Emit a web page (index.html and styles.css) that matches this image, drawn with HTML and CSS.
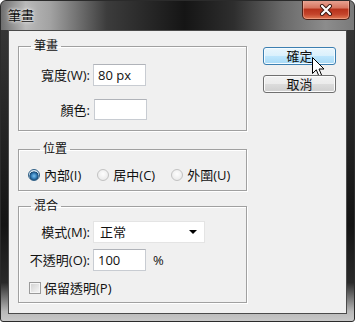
FILE: index.html
```html
<!DOCTYPE html>
<html lang="zh-Hant">
<head>
    <meta charset="UTF-8">
    <title>筆畫</title>
    <link rel="stylesheet" href="styles.css">
</head>
<body>
    <div class="window">
        <div class="titlebar">
            <span class="title">筆畫</span>
            <div class="close-btn">
                <svg width="14" height="12" viewBox="0 0 14 12">
                    <path d="M3 2 L11 10 M11 2 L3 10" stroke="#3a1810" stroke-width="4" stroke-linecap="round"/>
                    <path d="M3 2 L11 10 M11 2 L3 10" stroke="#fff" stroke-width="2.2" stroke-linecap="round"/>
                </svg>
            </div>
        </div>

        <div class="frame">
            <div class="client">
                <div class="groups">
                    <fieldset class="group group-stroke">
                        <legend>筆畫</legend>
                        <div class="form-grid">
                            <label class="lbl">寬度(W):</label>
                            <span class="field">80 px</span>
                            <label class="lbl">顏色:</label>
                            <span class="field color-field"></span>
                        </div>
                    </fieldset>

                    <fieldset class="group group-pos">
                        <legend>位置</legend>
                        <div class="radios">
                            <span class="radio-item"><span class="radio checked"></span>內部(I)</span>
                            <span class="radio-item"><span class="radio"></span>居中(C)</span>
                            <span class="radio-item"><span class="radio"></span>外圍(U)</span>
                        </div>
                    </fieldset>

                    <fieldset class="group group-blend">
                        <legend>混合</legend>
                        <div class="form-grid blend-grid">
                            <label class="lbl">模式(M):</label>
                            <span class="select">正常<span class="arrow"></span></span>
                            <label class="lbl">不透明(O):</label>
                            <span class="with-unit"><span class="field">100</span><span class="unit">%</span></span>
                        </div>
                        <div class="check-row">
                            <span class="checkbox"></span>保留透明(P)
                        </div>
                    </fieldset>
                </div>

                <div class="buttons">
                    <div class="btn btn-hover">確定
                        <svg class="cursor" width="14" height="21" viewBox="0 0 14 21">
                            <path d="M0.5 0.5 L0.5 16.5 L4.3 12.8 L7 19.3 L9.6 18.2 L7 12 L12 12 Z" fill="#fff" stroke="#000" stroke-width="1" stroke-linejoin="round"/>
                        </svg>
                    </div>
                    <div class="btn">取消</div>
                </div>
            </div>
        </div>
    </div>
</body>
</html>
```

FILE: styles.css
```css
body {
    margin: 0;
    padding: 0;
    background-color: #fff;
    font-family: "Open Sans", "Noto Sans CJK TC", sans-serif;
    font-size: 13px;
    color: #111;
}

.window {
    width: 355px;
    height: 322px;
    box-sizing: border-box;
    border: 1px solid #2b2b2b;
    border-radius: 6px 6px 3px 3px;
    display: flex;
    flex-direction: column;
    overflow: hidden;
    background: linear-gradient(to bottom, #3a3a3a 0%, #141414 70%, #2a2a2a 88%, #b8b8b8 97%, #c8c8c8 100%);
}

.titlebar {
    height: 29px;
    flex-shrink: 0;
    display: flex;
    justify-content: space-between;
    align-items: flex-start;
    background: linear-gradient(to right, #6e6e6e 0%, #b9b9b9 7%, #a2a2a2 14%, #3c3c3c 30%, #151515 52%, #2e2e2e 66%, #6a6a6a 80%, #8c8c8c 92%, #7a7a7a 100%);
}

.title {
    margin: 6px 0 0 7px;
    font-size: 13px;
    line-height: 16px;
    text-shadow: 0 0 6px #e0e0e0, 0 0 3px #fff;
}

.close-btn {
    width: 46px;
    height: 19px;
    margin: -1px 4px 0 0;
    border: 1px solid #4b1f17;
    border-top: none;
    border-radius: 0 0 5px 5px;
    box-shadow: inset 0 0 0 1px rgba(255, 200, 180, 0.45);
    background: linear-gradient(to bottom, #e9a898 0%, #d77762 40%, #b8331c 50%, #c4442b 75%, #e07a55 100%);
    display: flex;
    align-items: center;
    justify-content: center;
}

.frame {
    flex: 1;
    padding: 0 7px 7px;
}

.client {
    height: 100%;
    box-sizing: border-box;
    background-color: #f0f0f0;
    border: 1px solid #4a4a4a;
    display: flex;
    gap: 16px;
    padding: 8px 0 0 9px;
}

.groups {
    width: 229px;
    display: flex;
    flex-direction: column;
}

.group {
    box-sizing: border-box;
    width: 229px;
    margin: 0;
    padding: 0;
    border: 1px solid #a0a0a0;
    box-shadow: inset 1px 1px #fff, 1px 1px #fff;
}

.group legend {
    margin-left: 12px;
    padding: 0 3px;
    line-height: 14px;
    font-size: 12px;
}

.group-stroke {
    padding: 11px 0 10px;
}

.group-pos {
    margin-top: 11px;
    padding: 11px 0 7px 9px;
}

.group-blend {
    margin-top: 8px;
    padding: 8px 0 6px;
}

.form-grid {
    display: grid;
    grid-template-columns: 71px auto;
    column-gap: 3px;
    row-gap: 13px;
    align-items: center;
    justify-items: start;
}

.blend-grid {
    row-gap: 6px;
}

.lbl {
    justify-self: end;
    line-height: 16px;
    white-space: nowrap;
}

.field {
    box-sizing: border-box;
    width: 53px;
    height: 22px;
    background-color: #fff;
    border: 1px solid #c8ccd2;
    border-top-color: #b0b3b9;
    padding: 0 4px;
    line-height: 20px;
}

.color-field {
    height: 21px;
    margin-left: 1px;
}

.with-unit {
    display: flex;
    align-items: center;
    gap: 7px;
}

.select {
    box-sizing: border-box;
    width: 112px;
    height: 22px;
    background-color: #fff;
    border: 1px solid #e4e4e4;
    padding: 0 6px;
    line-height: 20px;
    display: flex;
    justify-content: space-between;
    align-items: center;
}

.arrow {
    width: 0;
    height: 0;
    border-left: 4px solid transparent;
    border-right: 4px solid transparent;
    border-top: 4px solid #000;
    margin-right: 1px;
}

.radios {
    display: flex;
    gap: 16px;
    line-height: 16px;
}

.radio-item {
    display: flex;
    align-items: center;
    gap: 4px;
}

.radio {
    box-sizing: border-box;
    width: 12px;
    height: 12px;
    border-radius: 50%;
    border: 1px solid #c2c2c2;
    background: radial-gradient(circle at 50% 40%, #fdfdfd 0%, #ececec 70%, #dcdcdc 100%);
}

.radio.checked {
    border-color: #2f5f86;
    background: radial-gradient(circle at 50% 60%, #7ec1ea 0%, #3a86c2 30%, #174a74 55%, #d6e6f2 62%, #f4f8fb 100%);
}

.check-row {
    display: flex;
    align-items: center;
    gap: 3px;
    margin: 9px 0 0 10px;
    line-height: 16px;
}

.checkbox {
    box-sizing: border-box;
    width: 12px;
    height: 12px;
    border: 1px solid #9a9a9a;
    box-shadow: inset 0 0 0 1px #f6f6f6;
    background: linear-gradient(135deg, #cfcfcf 0%, #e8e8e8 60%, #f7f7f7 100%);
}

.buttons {
    width: 73px;
    padding-top: 8px;
    display: flex;
    flex-direction: column;
    gap: 10px;
}

.btn {
    position: relative;
    box-sizing: border-box;
    height: 18px;
    border: 1px solid #707070;
    border-radius: 3px;
    box-shadow: inset 0 0 0 1px #fbfbfb;
    background: linear-gradient(to bottom, #f2f2f2 0%, #ebebeb 50%, #dcdcdc 51%, #cfcfcf 100%);
    text-align: center;
    line-height: 16px;
}

.btn-hover {
    border-color: #3c7fb1;
    box-shadow: inset 0 0 0 1px #f4fbff;
    background: linear-gradient(to bottom, #eaf6fd 0%, #d9f0fc 50%, #bee6fd 51%, #a7d9f5 100%);
}

.cursor {
    position: absolute;
    left: 48px;
    top: 9px;
}
```
